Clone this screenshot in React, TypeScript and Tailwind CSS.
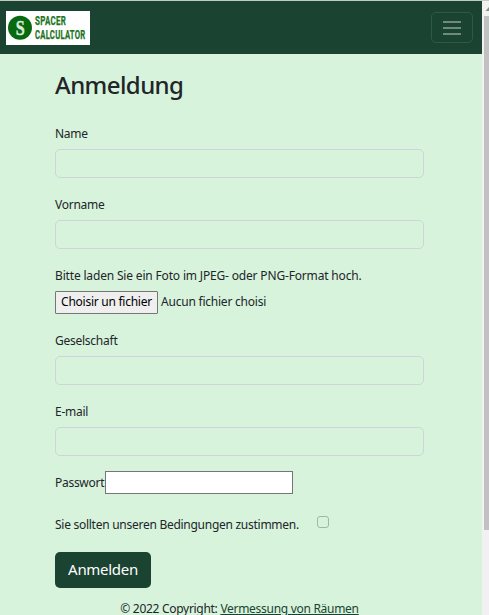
import React from "react";

function Field({ label }: { label: string }) {
  return (
    <div className="mb-[18px] h-[53px]">
      <label className="block h-[18px] leading-[18px]">
        <span className="tracking-[-0.25px]">{label}</span>
      </label>
      <input className="mt-[6px] block h-[29px] w-full rounded-[5px] border border-[#ced4da] bg-transparent px-2 outline-none" />
    </div>
  );
}

function Logo() {
  return (
    <svg width="84" height="34" viewBox="0 0 84 34" className="block bg-white">
      <circle cx="14" cy="16.8" r="12" fill="#086a10" />
      <text x="14.3" y="23.5" textAnchor="middle" fontFamily="Liberation Serif, serif" fontWeight="700" fontSize="20" textLength="9" lengthAdjust="spacingAndGlyphs" fill="#dcebdc" stroke="#dcebdc" strokeWidth="0.4">S</text>
      <g fontFamily="Roboto, sans-serif" fontWeight="700" fontSize="12" fill="#1c7422" stroke="#1c7422" strokeWidth="0.25" letterSpacing="0.4">
        <text x="29" y="14" textLength="31" lengthAdjust="spacingAndGlyphs">SPACER</text>
        <text x="29" y="28" textLength="50.5" lengthAdjust="spacingAndGlyphs">CALCULATOR</text>
      </g>
    </svg>
  );
}

export default function App() {
  return (
    <div className="flex h-[615px] w-[489px] overflow-hidden border-t border-[#c4c9c5] bg-[#d8f3dc] font-['Noto_Sans',sans-serif] text-[12px] text-[#212529]">
      <div className="flex w-[482px] flex-col">
        <header className="flex h-[53px] shrink-0 items-center justify-between bg-[#1b4332] pr-[9px] pl-[6px]">
          <Logo />
          <button className="flex h-[31px] w-[42px] items-center justify-center rounded-[5px] border border-[#32574a]">
            <svg width="20" height="16" viewBox="0 0 20 16" stroke="#8da198" strokeWidth="1.7">
              <path d="M1 2h18M1 8h18M1 14h18" />
            </svg>
          </button>
        </header>
        <main className="ml-[55px] w-[369px] pt-[14px]">
          <h1 className="h-[34px] text-[24px] leading-[34px] font-medium">
            <span className="tracking-[-0.58px]">Anmeldung</span>
          </h1>
          <form className="mt-[23px]">
            <Field label="Name" />
            <Field label="Vorname" />
            <div className="h-[65px]">
              <div className="h-[18px] leading-[18px] whitespace-nowrap">
                <span className="tracking-[-0.17px]">Bitte laden Sie ein Foto im JPEG- oder PNG-Format hoch.</span>
              </div>
              <div className="mt-[6px] flex h-[23px] items-center whitespace-nowrap">
                <button type="button" className="mr-[3px] h-[23px] w-[103px] rounded-[1px] border border-[#767676] bg-[#efefef] pb-[2px] leading-[19px] text-black">
                  <span className="tracking-[-0.26px]">Choisir un fichier</span>
                </button>
                <span className="-mt-[2px] tracking-[-0.22px]">Aucun fichier choisi</span>
              </div>
            </div>
            <Field label="Geselschaft" />
            <Field label="E-mail" />
            <div className="-mt-[3px] flex h-[23px] items-center">
              <label className="w-[50px] whitespace-nowrap"><span className="tracking-[-0.28px]">Passwort</span></label>
              <input type="password" className="h-[23px] w-[188px] border border-[#767676] bg-white outline-none" />
            </div>
            <div className="mt-[21px] flex h-[18px] items-center">
              <label className="w-[262px] pt-[2px] whitespace-nowrap"><span className="tracking-[-0.27px]">Sie sollten unseren Bedingungen zustimmen.</span></label>
              <span className="-mt-[5px] h-[12px] w-[12px] rounded-[3px] border border-[#a2b5a6]" />
            </div>
            <button type="button" className="mt-[19px] block h-[36px] w-[96px] rounded-[5px] bg-[#1b4332] pb-[2px] text-[15px] text-white">
              <span className="tracking-[-0.3px]">Anmelden</span>
            </button>
          </form>
          <footer className="mt-[12px] h-[18px] text-center leading-[18px] whitespace-nowrap">
            <span className="tracking-[-0.29px]">© 2022 Copyright: <a className="text-[#1b4332] underline decoration-1 underline-offset-1">Vermessung von Räumen</a></span>
          </footer>
        </main>
      </div>
      <div className="flex w-[7px] flex-col items-end bg-[#f1f1f1]">
        <svg width="5" height="15" viewBox="0 0 5 15" className="shrink-0"><path d="M1.5 10 5 6v4Z" fill="#8b8b8b" /></svg>
        <div className="h-[514px] w-[5px] bg-[#c1c1c1]" />
      </div>
    </div>
  );
}
